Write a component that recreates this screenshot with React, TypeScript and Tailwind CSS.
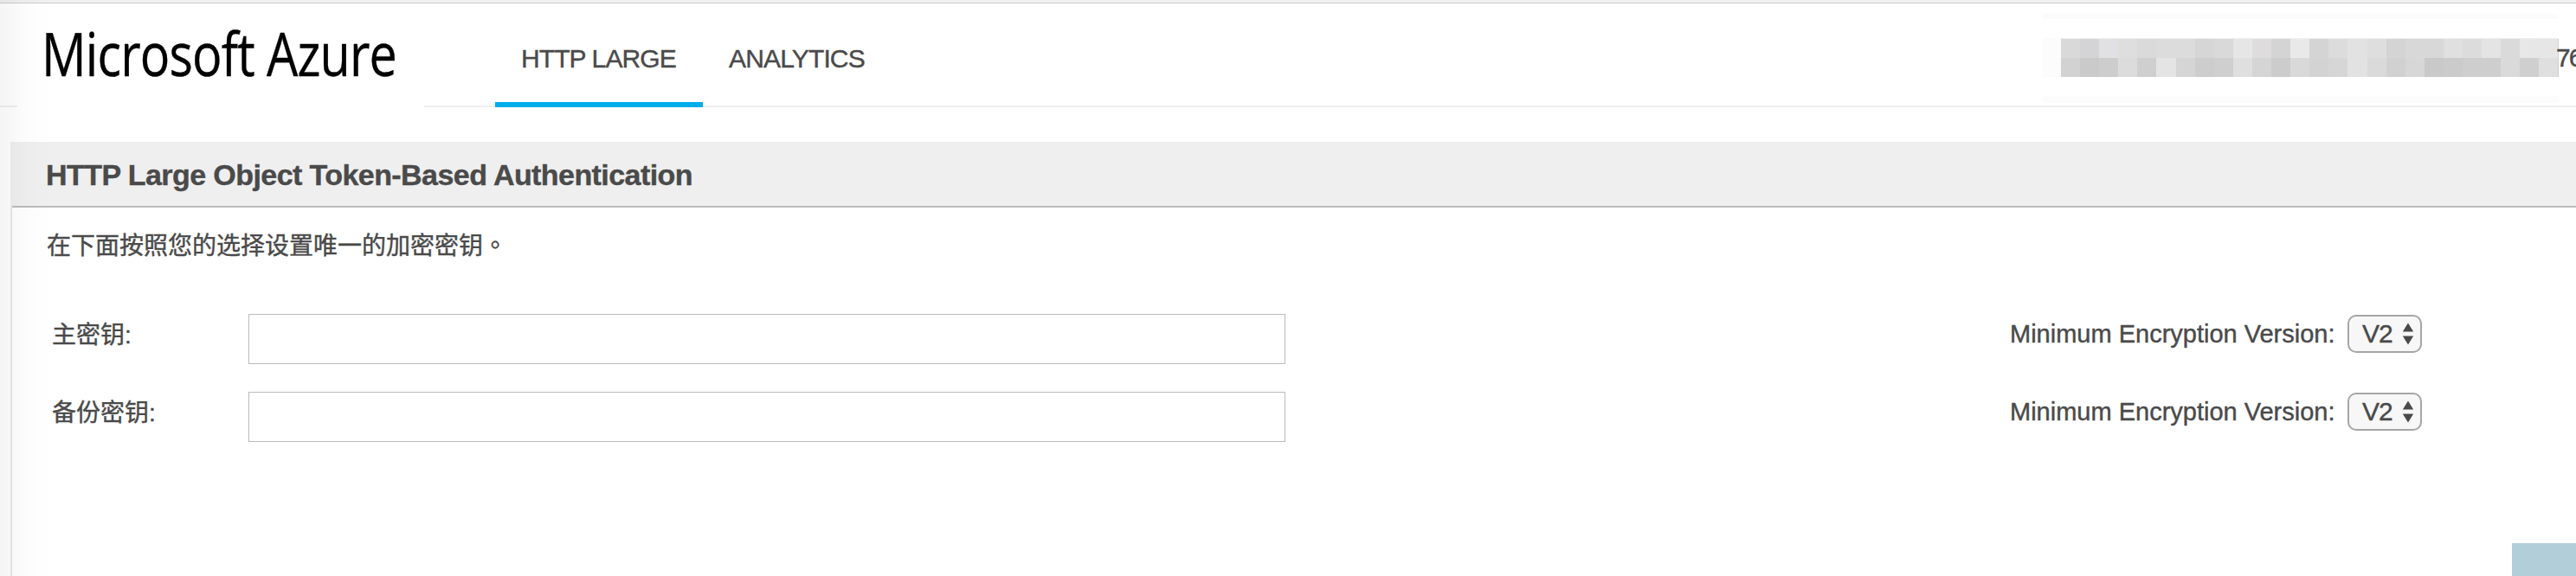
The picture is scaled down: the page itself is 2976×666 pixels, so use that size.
import React from "react";

const topCells = [
  "#d9d9da", "#d4d4d6", "#e1e1e4", "#dedede", "#dadada", "#dcdcdc", "#dcdcdc", "#d6d6d6", "#d9d9d9",
  "#e6e6e6", "#dedcdd", "#d4d4d4", "#e9e9e9", "#d4d4d4", "#dcdcdc", "#e2e2e2", "#dedede", "#d4d4d4",
  "#d8d8d8", "#d8d8d8", "#e0e0e0", "#dcdcdc", "#e4e4e4", "#dadada", "#e7e7e7", "#e6e6e6", "#d2d2d2",
];
const bottomCells = [
  "#d2d2d2", "#cacaca", "#cdcdcd", "#dcdcdc", "#cfcfcf", "#e4e4e4", "#d5d5d5", "#cdcdcd", "#cfcfcf",
  "#dfdfdf", "#d5d5d5", "#cccccc", "#d9d9d9", "#d3d3d3", "#d6d6d6", "#e2e2e2", "#dadada", "#d1d1d1",
  "#d7d7d7", "#c9c9c9", "#cbcbcb", "#cecece", "#cecece", "#dadada", "#cfcfcf", "#dfdfdf", "#cdcdcd",
];

function MaskRow({ cells }: { cells: string[] }) {
  return (
    <div className="flex h-[22px] w-[575px] overflow-hidden">
      {cells.map((color, i) => (
        <div key={i} className="h-full w-[22.1px] shrink-0" style={{ backgroundColor: color }} />
      ))}
    </div>
  );
}

function AccountInfo() {
  return (
    <div className="flex w-[616px] shrink-0">
      <div className="w-[596px] shrink-0 pt-3">
        <div className="h-1.5 bg-[#fbfbfb]" />
        <div className="mt-[22px] flex h-[45px] bg-[#fcfcfc] pl-[21px]">
          <div className="border-t border-[#eeeeee]">
            <MaskRow cells={topCells} />
            <MaskRow cells={bottomCells} />
          </div>
        </div>
        <div className="mt-[22px] h-2 bg-[#fcfcfc]" />
      </div>
      <span className="-ml-[3px] pt-[46px] text-[30px] leading-[34px] tracking-[-2px] whitespace-nowrap">76</span>
    </div>
  );
}

function VersionSelect() {
  return (
    <button className="flex h-11 w-[86px] items-center rounded-[10px] border-2 border-[#a6a6a6] bg-[#f7f7f7] pl-[15px] text-[30px] leading-8 tracking-[-1px]">
      <span className="w-[37px] text-left">V2</span>
      <svg className="ml-[9px] h-[26px] w-3.5 shrink-0" viewBox="0 0 14 26" fill="#4a4a4a">
        <path d="M7 0.5L13.2 10.5H0.8Z" />
        <path d="M0.8 15.5H13.2L7 25.5Z" />
      </svg>
    </button>
  );
}

function KeyRow({ label }: { label: string }) {
  return (
    <div className="flex h-[58px] items-start">
      <label className="w-[227px] shrink-0 pt-1 font-['Liberation_Sans','Noto_Sans_CJK_SC',sans-serif] text-[28px] leading-[42px]">
        {label}
      </label>
      <input className="h-[58px] w-[1198px] shrink-0 border border-[#bbbbbb] bg-white px-3 outline-none" />
      <span className="ml-[837px] w-[390px] shrink-0 pt-[6px] text-[29px] leading-[34px] whitespace-nowrap">
        Minimum Encryption Version:
      </span>
      <div className="pt-px">
        <VersionSelect />
      </div>
    </div>
  );
}

export default function App() {
  return (
    <div className="relative flex h-[666px] w-[2976px] flex-col overflow-hidden bg-white font-['Liberation_Sans','Noto_Sans_CJK_SC',sans-serif] text-[#4a4a4a] [-webkit-text-stroke:0.4px]">
      <div className="h-1 shrink-0 border-b border-[#cccccc] bg-[#f0f0f0]" />
      <header className="flex h-[120px] shrink-0">
        <div className="w-5 shrink-0 border-b-2 border-[#eeeeee]" />
        <div className="w-[470px] shrink-0 pl-[28px]">
          <div className="origin-left scale-x-[0.82] pt-[9px] font-['Open_Sans','Noto_Sans',sans-serif] text-[70px] leading-[96px] tracking-[-1px] whitespace-nowrap text-black">
            Microsoft Azure
          </div>
        </div>
        <div className="flex grow border-b-2 border-[#eeeeee]">
          <nav className="ml-[82px] flex h-[120px] grow text-[30px] leading-[34px]">
            <a className="w-60 border-b-[6px] border-[#00adeb] pt-[47px] pl-[30px] tracking-[-0.9px] whitespace-nowrap">
              HTTP LARGE
            </a>
            <a className="pt-[47px] pl-[30px] tracking-[-0.85px] whitespace-nowrap">ANALYTICS</a>
          </nav>
          <AccountInfo />
        </div>
      </header>
      <main className="mt-10 ml-3 flex grow flex-col">
        <div className="flex h-[76px] shrink-0 bg-[#efefef] pl-0.5">
          <h1 className="grow border-b-2 border-[#bbbbbb] pt-[19px] pl-[39px] text-[34px] leading-[38px] font-bold tracking-[-0.57px]">
            HTTP Large Object Token-Based Authentication
          </h1>
        </div>
        <div className="flex grow flex-col border-l-2 border-[#e8e8e8]">
          <p className="pt-[21px] pl-[40px] font-['Noto_Sans_CJK_SC',sans-serif] text-[28px] leading-[42px]">
            在下面按照您的选择设置唯一的加密密钥<span lang="zh-TW" className="font-['Noto_Sans_CJK_TC',sans-serif]">。</span>
          </p>
          <div className="flex flex-col gap-8 pt-[60px] pl-[46px]">
            <KeyRow label="主密钥:" />
            <KeyRow label="备份密钥:" />
          </div>
          <div className="mt-auto flex justify-end">
            <button className="h-[38px] w-[74px] bg-[#b2ced9]" aria-label="Update" />
          </div>
        </div>
      </main>
      <div className="pointer-events-none absolute inset-y-0 left-0 w-[60px] bg-linear-to-r from-black/[0.04] via-black/[0.012] to-transparent" />
    </div>
  );
}
